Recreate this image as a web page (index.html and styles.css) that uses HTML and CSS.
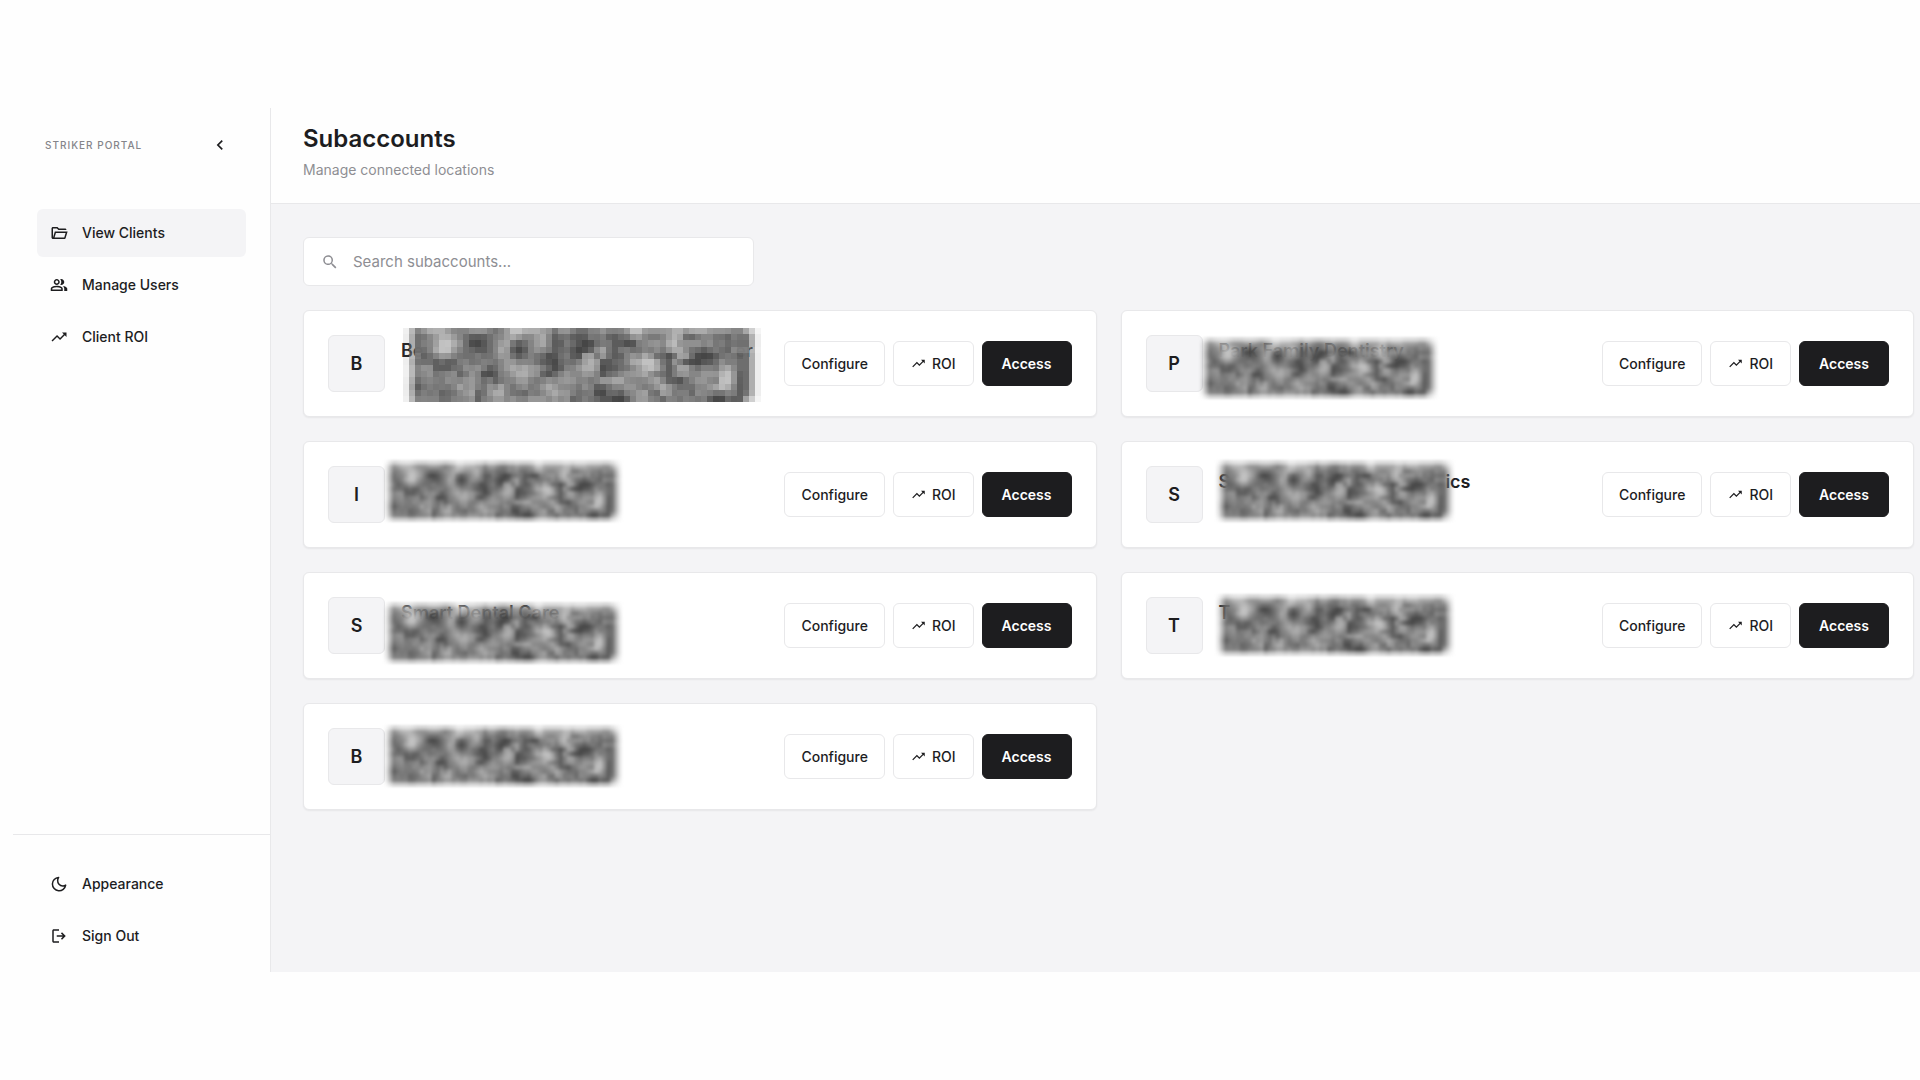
FILE: index.html
```html
<!DOCTYPE html>
<html lang="en">
<head>
    <meta charset="UTF-8">
    <meta name="viewport" content="width=device-width, initial-scale=1.0">
    <title>Striker Portal - Subaccounts</title>
    <link rel="stylesheet" href="styles.css">
</head>
<body>
    <svg class="sprite" aria-hidden="true">
        <symbol id="i-chevron" viewBox="0 0 24 24"><path d="M15.4 7.4 14 6l-6 6 6 6 1.4-1.4-4.6-4.6z"/></symbol>
        <symbol id="i-folder" viewBox="0 0 24 24"><path d="M4 20c-1.100 0-2-.9-2-2V6c0-1.100.9-2 2-2h6l2 2h8c1.100 0 2 .9 2 2H11.200l-2-2H4v12l2.400-8h17.100l-2.600 8.600c-.1.400-.4.800-.7 1-.4.300-.8.400-1.200.400H4zm2.100-2H19l1.800-6H7.900l-1.800 6z"/></symbol>
        <symbol id="i-users" viewBox="0 0 24 24"><path d="M1 20v-2.800c0-.6.1-1.100.4-1.600.3-.5.700-.8 1.200-1.100 1-.5 2.100-.9 3.100-1.100A14 14 0 0 1 9 13c1.100 0 2.200.1 3.300.4 1 .2 2.100.6 3.100 1.100.5.300.9.600 1.200 1.100.3.500.4 1 .4 1.600V20H1zm18 0v-3c0-.7-.2-1.400-.6-2.100-.4-.7-1-1.200-1.700-1.700.9.100 1.700.3 2.400.5.800.3 1.500.5 2.100.9.600.3 1 .7 1.300 1.100.3.400.5.900.5 1.300v3h-4zM9 12c-1.100 0-2-.4-2.800-1.200A3.900 3.900 0 0 1 5 8c0-1.100.4-2 1.200-2.800A3.900 3.900 0 0 1 9 4c1.100 0 2 .4 2.800 1.200C12.600 6 13 6.900 13 8s-.4 2-1.200 2.800C11 11.600 10.100 12 9 12zm10-4c0 1.100-.4 2-1.200 2.800A3.900 3.900 0 0 1 15 12c-.2 0-.4 0-.7-.1l-.7-.1c.4-.5.800-1.100 1-1.700.3-.7.400-1.400.4-2.100s-.1-1.400-.4-2.100c-.2-.6-.6-1.200-1-1.700.2-.1.400-.1.700-.2h.7c1.100 0 2 .4 2.800 1.200C18.600 6 19 6.900 19 8zM3 18h12v-.8c0-.2 0-.4-.1-.5a1 1 0 0 0-.4-.4c-.9-.5-1.800-.8-2.700-1a12 12 0 0 0-5.600 0c-.9.200-1.800.5-2.700 1l-.4.400c-.1.100-.1.300-.1.500v.8zm6-8c.6 0 1-.2 1.400-.6.4-.4.600-.8.600-1.400s-.2-1-.6-1.400C10 6.200 9.600 6 9 6s-1 .2-1.400.6C7.200 7 7 7.400 7 8s.2 1 .6 1.400c.4.400.8.600 1.400.6z"/></symbol>
        <symbol id="i-trend" viewBox="0 0 24 24"><path d="m16 6 2.300 2.300-4.900 4.900-4-4L2 16.600 3.400 18l6-6 4 4 6.300-6.300L22 12V6z"/></symbol>
        <symbol id="i-search" viewBox="0 0 24 24"><path d="M15.500 14h-.8l-.3-.3A6.500 6.500 0 1 0 13.700 14.400l.3.300v.8l5 5 1.500-1.500zM9.500 14a4.500 4.500 0 1 1 0-9 4.500 4.500 0 0 1 0 9z"/></symbol>
        <symbol id="i-moon" viewBox="0 0 24 24"><path d="M11.500 3.200A8.900 8.900 0 1 0 20.900 13.500c-1.200.8-2.600 1.200-4 1.100-3.900-.2-6.900-3.500-6.700-7.400.1-1.500.5-2.800 1.300-4z" fill="none" stroke="currentColor" stroke-width="2" stroke-linejoin="round"/></symbol>
        <symbol id="i-logout" viewBox="0 0 24 24"><path d="M5 21c-1.100 0-2-.9-2-2V5c0-1.100.9-2 2-2h7v2H5v14h7v2H5zm11-4-1.400-1.500 2.500-2.500H9v-2h8.100l-2.500-2.500L16 7l5 5-5 5z"/></symbol>
    </svg>

    <div class="app">
        <aside class="sidebar">
            <div class="brand">
                <span class="brand-name">STRIKER PORTAL</span>
                <button class="collapse" type="button" aria-label="Collapse menu"><svg class="icon"><use href="#i-chevron"/></svg></button>
            </div>
            <nav class="nav">
                <a class="nav-item active" href="#"><svg class="icon"><use href="#i-folder"/></svg>View Clients</a>
                <a class="nav-item" href="#"><svg class="icon"><use href="#i-users"/></svg>Manage Users</a>
                <a class="nav-item" href="#"><svg class="icon"><use href="#i-trend"/></svg>Client ROI</a>
            </nav>
            <div class="nav nav-bottom">
                <button class="nav-item" type="button"><svg class="icon"><use href="#i-moon"/></svg>Appearance</button>
                <button class="nav-item" type="button"><svg class="icon"><use href="#i-logout"/></svg>Sign Out</button>
            </div>
        </aside>

        <main class="main">
            <header class="header">
                <h1>Subaccounts</h1>
                <p>Manage connected locations</p>
            </header>

            <div class="content">
                <div class="search">
                    <svg class="icon"><use href="#i-search"/></svg>
                    <input type="search" placeholder="Search subaccounts..." aria-label="Search subaccounts">
                </div>

                <div class="grid">
                    <article class="card">
                        <div class="avatar">B</div>
                        <div class="name name-wide"><span>Be</span><span>er</span></div>
                        <div class="actions">
                            <button class="btn" type="button">Configure</button>
                            <button class="btn btn-roi" type="button"><svg class="icon"><use href="#i-trend"/></svg>ROI</button>
                            <button class="btn btn-dark" type="button">Access</button>
                        </div>
                        <canvas class="mask mask-large" width="60" height="12"></canvas>
                    </article>
                    <article class="card">
                        <div class="avatar">P</div>
                        <div class="name">Park Family Dentistry</div>
                        <div class="actions">
                            <button class="btn" type="button">Configure</button>
                            <button class="btn btn-roi" type="button"><svg class="icon"><use href="#i-trend"/></svg>ROI</button>
                            <button class="btn btn-dark" type="button">Access</button>
                        </div>
                        <canvas class="mask mask-near" width="60" height="14"></canvas>
                    </article>
                    <article class="card">
                        <div class="avatar">I</div>
                        <div class="name"></div>
                        <div class="actions">
                            <button class="btn" type="button">Configure</button>
                            <button class="btn btn-roi" type="button"><svg class="icon"><use href="#i-trend"/></svg>ROI</button>
                            <button class="btn btn-dark" type="button">Access</button>
                        </div>
                        <canvas class="mask" width="60" height="14"></canvas>
                    </article>
                    <article class="card">
                        <div class="avatar">S</div>
                        <div class="name name-mid"><span>S</span><span>ics</span></div>
                        <div class="actions">
                            <button class="btn" type="button">Configure</button>
                            <button class="btn btn-roi" type="button"><svg class="icon"><use href="#i-trend"/></svg>ROI</button>
                            <button class="btn btn-dark" type="button">Access</button>
                        </div>
                        <canvas class="mask mask-right" width="60" height="14"></canvas>
                    </article>
                    <article class="card">
                        <div class="avatar">S</div>
                        <div class="name">Smart Dental Care</div>
                        <div class="actions">
                            <button class="btn" type="button">Configure</button>
                            <button class="btn btn-roi" type="button"><svg class="icon"><use href="#i-trend"/></svg>ROI</button>
                            <button class="btn btn-dark" type="button">Access</button>
                        </div>
                        <canvas class="mask mask-low" width="60" height="14"></canvas>
                    </article>
                    <article class="card">
                        <div class="avatar">T</div>
                        <div class="name">T</div>
                        <div class="actions">
                            <button class="btn" type="button">Configure</button>
                            <button class="btn btn-roi" type="button"><svg class="icon"><use href="#i-trend"/></svg>ROI</button>
                            <button class="btn btn-dark" type="button">Access</button>
                        </div>
                        <canvas class="mask mask-right mask-mid" width="60" height="14"></canvas>
                    </article>
                    <article class="card">
                        <div class="avatar">B</div>
                        <div class="name"></div>
                        <div class="actions">
                            <button class="btn" type="button">Configure</button>
                            <button class="btn btn-roi" type="button"><svg class="icon"><use href="#i-trend"/></svg>ROI</button>
                            <button class="btn btn-dark" type="button">Access</button>
                        </div>
                        <canvas class="mask mask-mid" width="60" height="14"></canvas>
                    </article>
                </div>
            </div>
        </main>
    </div>

    <script src="mask.js"></script>
</body>
</html>
```
FILE: styles.css
```css
* { margin: 0; padding: 0; box-sizing: border-box; }
body {
    font-family: Inter, "Liberation Sans", sans-serif;
    font-size: 14px;
    line-height: 20px;
    background: #fefefe;
    color: #1d1d1f;
    padding: 108px 0;
}
button, input { font: inherit; color: inherit; }
button { cursor: pointer; }
.sprite { display: none; }
.icon { width: 18px; height: 18px; fill: currentColor; flex: none; }

.app { display: flex; min-height: calc(100vh - 216px); }

/* sidebar */
.sidebar {
    width: 258px;
    margin-left: 13px;
    flex: none;
    display: flex;
    flex-direction: column;
    border-right: 1px solid #e8e8ea;
}
.brand {
    display: flex;
    align-items: center;
    justify-content: space-between;
    height: 74px;
    padding: 0 40px 0 32px;
    margin-bottom: 27px;
}
.brand-name { font-size: 10px; font-weight: 500; letter-spacing: 1px; color: #85858a; }
.collapse { display: flex; background: none; border: none; }
.collapse .icon { width: 20px; height: 20px; }
.nav { display: flex; flex-direction: column; gap: 4px; padding: 0 24px; }
.nav-item {
    display: flex;
    align-items: center;
    gap: 14px;
    height: 48px;
    padding: 0 13px;
    border: none;
    border-radius: 6px;
    background: none;
    font-weight: 500;
    text-decoration: none;
    color: inherit;
}
.nav-item.active { background: #f4f4f6; }
.nav-bottom { margin-top: auto; padding: 25px 24px 12px; border-top: 1px solid #e8e8ea; }

/* main */
.main { flex: 1; min-width: 0; background: #f4f4f6; }
.header { padding: 15px 32px 23px; background: #fefefe; border-bottom: 1px solid #e8e8ea; }
.header h1 { font-size: 24px; font-weight: 600; line-height: 32px; }
.header p { margin-top: 5px; color: #8e8e93; }
.content { padding: 33px 6px 32px 32px; }
.search {
    display: flex;
    align-items: center;
    gap: 14px;
    width: 28%;
    min-width: 451px;
    height: 49px;
    padding: 0 17px;
    margin-bottom: 24px;
    background: #fff;
    border: 1px solid #e8e8ea;
    border-radius: 6px;
    color: #8e8e93;
}
.search input { flex: 1; min-width: 0; border: none; outline: none; background: none; font-size: 15px; }
.search input::placeholder { color: #8e8e93; opacity: 1; }

.grid { display: grid; grid-template-columns: 1fr 1fr; gap: 24px; }
.card {
    position: relative;
    display: flex;
    align-items: center;
    gap: 16px;
    padding: 24px;
    background: #fff;
    border: 1px solid #e8e8ea;
    border-radius: 6px;
    box-shadow: 0 1px 2px rgba(0, 0, 0, 0.06);
}
.avatar {
    display: flex;
    align-items: center;
    justify-content: center;
    width: 57px;
    height: 57px;
    flex: none;
    background: #f4f4f6;
    border: 1px solid #e8e8ea;
    border-radius: 6px;
    font-size: 18px;
    font-weight: 600;
}
.name {
    display: flex;
    justify-content: space-between;
    align-self: flex-start;
    padding-top: 6px;
    font-size: 18px;
    font-weight: 600;
}
.name-wide { width: 352px; }
.name-mid { width: 252px; }
.actions { display: flex; align-items: center; gap: 8px; margin-left: auto; }
.btn {
    display: flex;
    align-items: center;
    gap: 6px;
    height: 45px;
    padding: 0 16px;
    background: #fff;
    border: 1px solid #e8e8ea;
    border-radius: 6px;
    font-weight: 500;
}
.btn-roi { padding: 0 17px; }
.btn-roi .icon { width: 15px; height: 15px; }
.btn-dark { padding: 0 19px; background: #1d1d1f; border-color: #1d1d1f; color: #fff; font-weight: 600; }

/* hides the client details */
.mask {
    position: absolute;
    left: 80px;
    top: 18px;
    width: 238px;
    height: 62px;
    filter: blur(1px);
}
.mask-mid { top: 21px; }
.mask-low { top: 29px; }
.mask-near { left: 78px; top: 26px; }
.mask-right { left: 94px; }
.mask-large {
    left: 99px;
    top: 17px;
    width: 358px;
    height: 74px;
    filter: none;
    image-rendering: pixelated;
}
```
FILE: mask.js
```js
// one hex digit per cell, higher is lighter
const rows = [
    '89aaa98889998789bbaaa997998778898889bb99999aa9aaa999988a',
    '7789aa9876667889a9889a867766687866779987789aa66788776877',
    '7889bba97556789a76789a86687655778665588998ab899989787777',
    '778abb98776678a9656898867765569a76887787979aa87767876988',
    '8678998777877899767877567865aa6a766898a96756aa7555678767',
    '77767668877887899888766577789aa56778aabba76a755566797877',
    '8996667798986789a9a998756889aa95667789aba867aa878879a877',
    '88978896798556889aa9965789889985778999a877689988999ab967',
    '7888798899878678899878989998878a9aa88889a8665789987bb967',
    '6787878a898798a8789789a988879866788998789a98777889aba867',
    '787867789a679aa87768789a99877855776889a76a97886988778867',
    '8888778889688998988999898967877665568998868878878655766a'
];

function cell(x, y) {
    x = Math.min(Math.max(x, 0), 55);
    y = Math.min(Math.max(y, 0), rows.length - 1);
    return parseInt(rows[y][x], 16);
}

function shade(x, y) {
    const near = (cell(x - 1, y) + cell(x + 1, y) + cell(x, y - 1) + cell(x, y + 1)) / 4;
    const level = cell(x, y) * 0.6 + near * 0.4;
    return Math.round((level - 8) * 23 + 130);
}

document.querySelectorAll('.mask').forEach(canvas => {
    const ctx = canvas.getContext('2d');
    const edge = canvas.height - rows.length;
    for (let y = 0; y < canvas.height; y++) {
        for (let x = 0; x < 60; x++) {
            let alpha = 0.98;
            if (x === 0 || x === 59) alpha = 0.12;
            else if (x === 1 || x === 58) alpha = 0.55;
            if (edge && (y === 0 || y === canvas.height - 1)) alpha *= 0.3;
            else if (edge && y < 3) alpha *= 0.9;
            const v = shade(x - 2, y - edge / 2);
            ctx.fillStyle = `rgba(${v}, ${v}, ${v}, ${alpha})`;
            ctx.fillRect(x, y, 1, 1);
        }
    }
});
```
